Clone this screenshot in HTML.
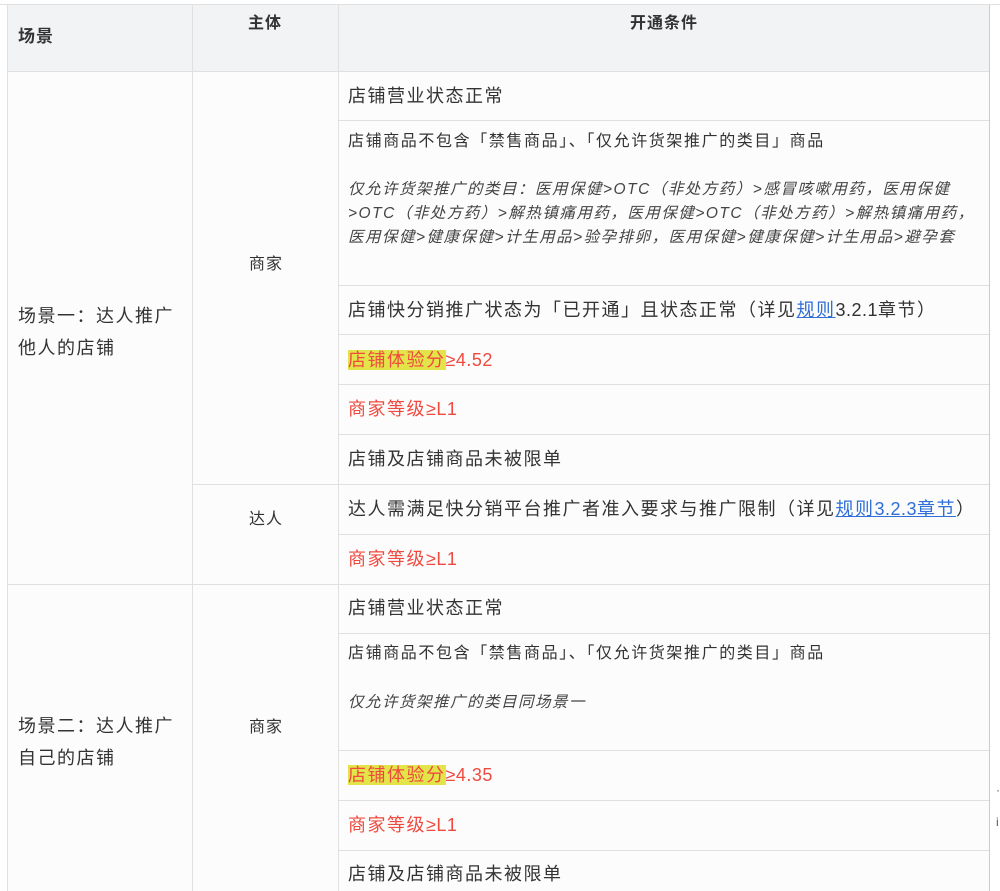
<!DOCTYPE html>
<html><head><meta charset="utf-8"><style>
body{margin:0;width:1000px;height:891px;background:#fff;position:relative;overflow:hidden;font-family:"Liberation Sans","Noto Sans CJK SC",sans-serif;color:#333}
.a{position:absolute}
.h{background:#e0e0e0}
.t{position:absolute;white-space:nowrap;font-size:18px;line-height:20px;letter-spacing:1.5px}
.s{font-size:16px;letter-spacing:1.6px}
.c2{font-size:16px;letter-spacing:1px}
.i{font-style:italic;font-size:15.5px;line-height:24px;color:#444;letter-spacing:1.5px}
.r{color:#ef4a3f}
.hl{background:#e3e34a}
.n{letter-spacing:0.5px}
a{color:#2f6fd6;text-decoration:underline}
</style></head><body>
<div class="a" style="left:8px;top:5px;width:981px;height:66px;background:#f2f3f5"></div>
<div class="a" style="left:8px;top:71px;width:981px;height:820px;background:#fcfcfc"></div>
<div class="a h" style="left:0;top:4px;width:1000px;height:1px"></div>
<div class="a h" style="left:7px;top:5px;width:1px;height:886px"></div>
<div class="a h" style="left:192px;top:5px;width:1px;height:886px"></div>
<div class="a h" style="left:338px;top:5px;width:1px;height:886px"></div>
<div class="a h" style="left:989px;top:5px;width:1px;height:886px;background:#ccc"></div>
<div class="a h" style="left:8px;top:71px;width:981px;height:1px"></div>
<div class="a h" style="left:8px;top:584px;width:981px;height:1px"></div>
<div class="a h" style="left:192px;top:484px;width:797px;height:1px"></div>
<div class="a h" style="left:338px;top:120px;width:651px;height:1px"></div>
<div class="a h" style="left:338px;top:285px;width:651px;height:1px"></div>
<div class="a h" style="left:338px;top:334px;width:651px;height:1px"></div>
<div class="a h" style="left:338px;top:384px;width:651px;height:1px"></div>
<div class="a h" style="left:338px;top:434px;width:651px;height:1px"></div>
<div class="a h" style="left:338px;top:534px;width:651px;height:1px"></div>
<div class="a h" style="left:338px;top:633px;width:651px;height:1px"></div>
<div class="a h" style="left:338px;top:750px;width:651px;height:1px"></div>
<div class="a h" style="left:338px;top:800px;width:651px;height:1px"></div>
<div class="a h" style="left:338px;top:850px;width:651px;height:1px"></div>
<div class="t" style="left:18px;top:27px;font-weight:bold;font-size:17px;letter-spacing:1px">场景</div>
<div class="t c2" style="left:248px;top:14px;font-weight:bold">主体</div>
<div class="t c2" style="left:630px;top:14px;font-weight:bold">开通条件</div>
<div class="t" style="left:18px;top:300px;line-height:32px">场景一：达人推广<br>他人的店铺</div>
<div class="t" style="left:18px;top:710px;line-height:32px">场景二：达人推广<br>自己的店铺</div>
<div class="t c2" style="left:249px;top:255px">商家</div>
<div class="t c2" style="left:249px;top:510px">达人</div>
<div class="t c2" style="left:249px;top:718px">商家</div>
<div class="t" style="left:348px;top:86px">店铺营业状态正常</div>
<div class="t s" style="left:348px;top:132px">店铺商品不包含「禁售商品」、「仅允许货架推广的类目」商品</div>
<div class="t i" style="left:348px;top:178px">仅允许货架推广的类目：医用保健&gt;OTC（非处方药）&gt;感冒咳嗽用药，医用保健<br>&gt;OTC（非处方药）&gt;解热镇痛用药，医用保健&gt;OTC（非处方药）&gt;解热镇痛用药，<br>医用保健&gt;健康保健&gt;计生用品&gt;验孕排卵，医用保健&gt;健康保健&gt;计生用品&gt;避孕套</div>
<div class="t" style="left:348px;top:300px">店铺快分销推广状态为「已开通」且状态正常（详见<a>规则</a><span class="n">3.2.1</span>章节）</div>
<div class="t r" style="left:348px;top:350px"><span class="hl">店铺体验分</span><span class="n">≥4.52</span></div>
<div class="t r" style="left:348px;top:399px">商家等级<span class="n">≥L1</span></div>
<div class="t" style="left:348px;top:449px">店铺及店铺商品未被限单</div>
<div class="t" style="left:348px;top:499px">达人需满足快分销平台推广者准入要求与推广限制（详见<a>规则<span class="n">3.2.3</span>章节</a>）</div>
<div class="t r" style="left:348px;top:549px">商家等级<span class="n">≥L1</span></div>
<div class="t" style="left:348px;top:598px">店铺营业状态正常</div>
<div class="t s" style="left:348px;top:644px">店铺商品不包含「禁售商品」、「仅允许货架推广的类目」商品</div>
<div class="t i" style="left:348px;top:691px">仅允许货架推广的类目同场景一</div>
<div class="t r" style="left:348px;top:765px"><span class="hl">店铺体验分</span><span class="n">≥4.35</span></div>
<div class="t r" style="left:348px;top:815px">商家等级<span class="n">≥L1</span></div>
<div class="t" style="left:348px;top:864px">店铺及店铺商品未被限单</div>
<div class="t" style="left:996px;top:780px;font-size:12px;color:#555">·</div>
<div class="t" style="left:996px;top:812px;font-size:12px;color:#555">i</div>
</body></html>
